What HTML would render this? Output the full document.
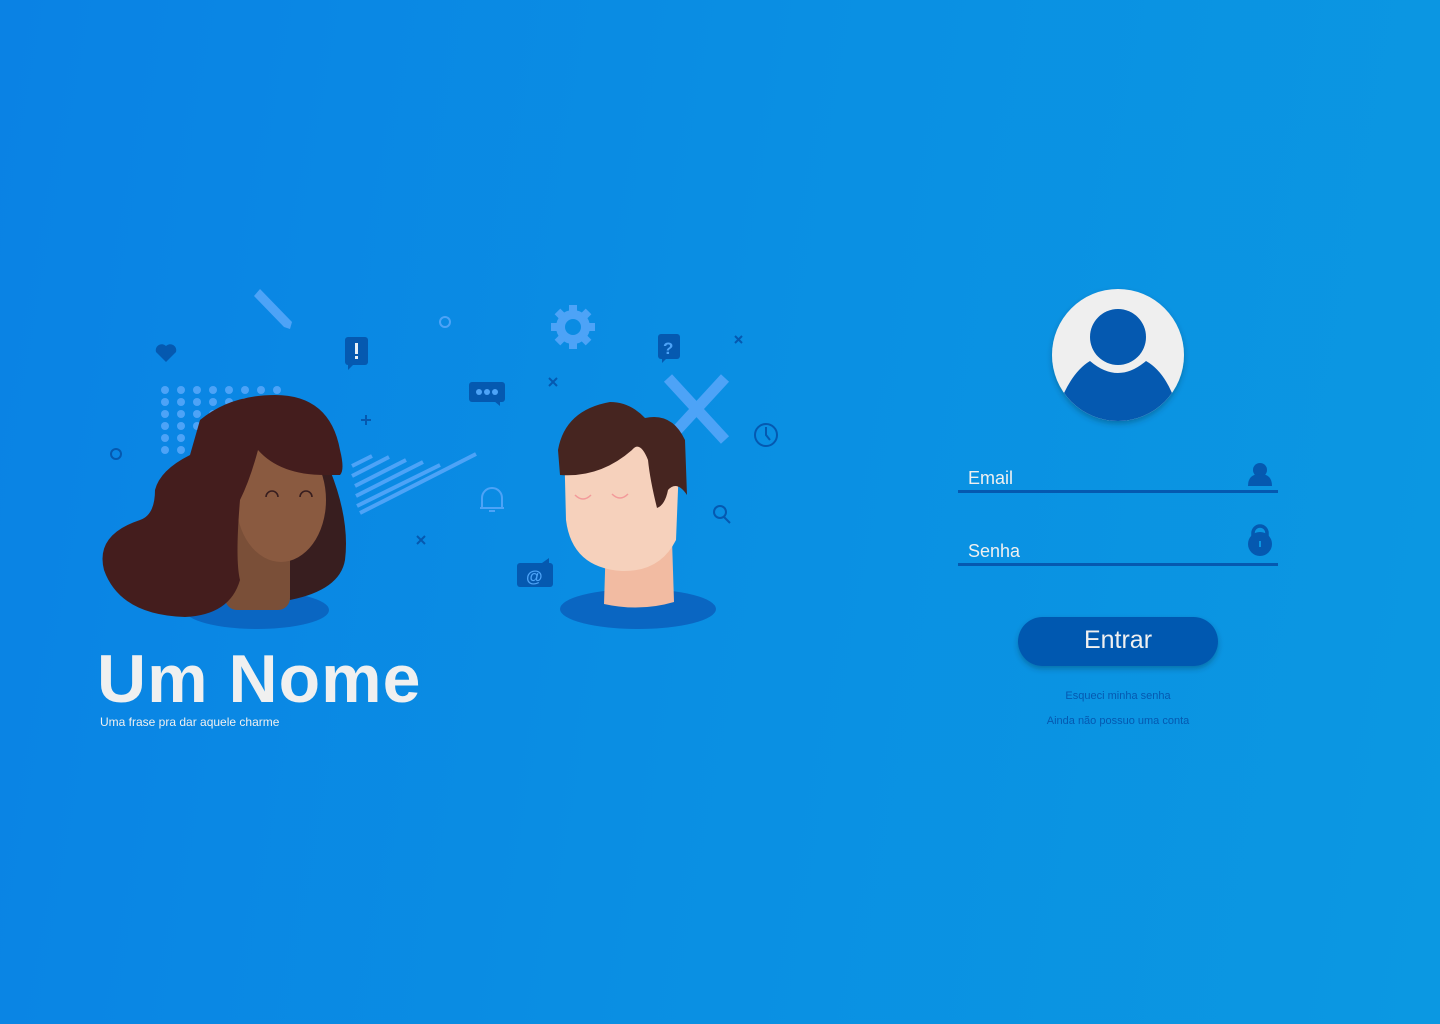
<!DOCTYPE html>
<html><head><meta charset="utf-8"><style>
html,body{margin:0;padding:0}
body{width:1440px;height:1024px;overflow:hidden;background:linear-gradient(100deg,#0a82e4 0%,#0a8fe3 50%,#0b98e2 100%);font-family:"Liberation Sans",sans-serif;position:relative}
.t{position:absolute;color:#f0f0f0}
</style></head><body>
<svg width="1440" height="1024" style="position:absolute;left:0;top:0">
<defs><filter id="sh" x="-20%" y="-20%" width="140%" height="150%"><feDropShadow dx="0" dy="3" stdDeviation="3" flood-color="#034" flood-opacity="0.35"/></filter></defs>
<g fill="#4da3f7">
<circle cx="165" cy="390" r="4"/><circle cx="181" cy="390" r="4"/><circle cx="197" cy="390" r="4"/><circle cx="213" cy="390" r="4"/><circle cx="229" cy="390" r="4"/><circle cx="245" cy="390" r="4"/><circle cx="261" cy="390" r="4"/><circle cx="277" cy="390" r="4"/>
<circle cx="165" cy="402" r="4"/><circle cx="181" cy="402" r="4"/><circle cx="197" cy="402" r="4"/><circle cx="213" cy="402" r="4"/><circle cx="229" cy="402" r="4"/><circle cx="245" cy="402" r="4"/>
<circle cx="165" cy="414" r="4"/><circle cx="181" cy="414" r="4"/><circle cx="197" cy="414" r="4"/><circle cx="213" cy="414" r="4"/>
<circle cx="165" cy="426" r="4"/><circle cx="181" cy="426" r="4"/><circle cx="197" cy="426" r="4"/>
<circle cx="165" cy="438" r="4"/><circle cx="181" cy="438" r="4"/>
<circle cx="165" cy="450" r="4"/><circle cx="181" cy="450" r="4"/>
<path d="M254 296 L260 289 L292 322 L290 329 L284 327 Z"/>
<circle cx="573" cy="327" r="17"/>
<g transform="translate(573 327)">
<rect x="-4" y="-22" width="8" height="8"/><rect x="-4" y="14" width="8" height="8"/><rect x="-22" y="-4" width="8" height="8"/><rect x="14" y="-4" width="8" height="8"/>
<g transform="rotate(45)"><rect x="-4" y="-22" width="8" height="8"/><rect x="-4" y="14" width="8" height="8"/><rect x="-22" y="-4" width="8" height="8"/><rect x="14" y="-4" width="8" height="8"/></g>
</g>
</g>
<circle cx="573" cy="327" r="8" fill="#0a8ce3"/>
<g stroke="#4da3f7" stroke-width="4"><line x1="352" y1="466" x2="372" y2="456"/><line x1="352" y1="476" x2="389" y2="457"/><line x1="355" y1="486" x2="406" y2="460"/><line x1="356" y1="496" x2="423" y2="462"/><line x1="357" y1="506" x2="440" y2="465"/><line x1="360" y1="513" x2="476" y2="454"/></g>
<path d="M668 378 L725 440 M725 378 L668 440" stroke="#4da3f7" stroke-width="11"/>
<g fill="none" stroke="#4da3f7" stroke-width="2"><circle cx="445" cy="322" r="5"/><path d="M482 508 v-10 a10 10 0 0 1 20 0 v10 z M480 508 h24 M489 511 h6"/></g>
<g fill="#0559b0">
<path d="M166 362 l-10-10 a6 6 0 0 1 10-6 a6 6 0 0 1 10 6 z"/>
<rect x="345" y="337" width="23" height="28" rx="3"/><path d="M348 364 v6 l6-6z"/>
<rect x="469" y="382" width="36" height="20" rx="3"/><path d="M494 401 l6 5 v-5z"/>
<rect x="658" y="334" width="22" height="25" rx="3"/><path d="M662 358 v5 l5-5z"/>
<rect x="517" y="563" width="36" height="24" rx="3"/><path d="M542 563 l7-5 v5z"/>
</g>
<rect x="355" y="343" width="3" height="11" fill="#fff" opacity=".9"/><rect x="355" y="356" width="3" height="3" fill="#fff" opacity=".9"/>
<g font-family="Liberation Sans" font-weight="bold"><text x="663" y="354" font-size="17" fill="#4da3f7">?</text><text x="526" y="582" font-size="17" fill="#4da3f7">@</text></g>
<g fill="#4da3f7"><circle cx="479" cy="392" r="3"/><circle cx="487" cy="392" r="3"/><circle cx="495" cy="392" r="3"/></g>
<g fill="none" stroke="#0559b0" stroke-width="2"><circle cx="116" cy="454" r="5"/><path d="M361 420h10M366 415v10M417 536l8 8M425 536l-8 8M549 378l8 8M557 378l-8 8M735 336l7 7M742 336l-7 7"/><circle cx="766" cy="435" r="11"/><path d="M766 427v8l4 5"/><circle cx="720" cy="512" r="6"/><path d="M724 517l6 6"/></g>
<!-- woman -->
<ellipse cx="257" cy="610" rx="72" ry="19" fill="#0a66c2"/>
<path d="M250 460 L330 470 Q350 520 345 560 Q340 590 290 600 L260 470 Z" fill="#381e1f"/>
<rect x="225" y="520" width="65" height="90" rx="12" fill="#7a4f38"/>
<ellipse cx="281" cy="500" rx="45" ry="62" fill="#8a5a40"/>
<path d="M200 420 Q230 395 275 395 Q330 395 340 450 Q345 470 340 475 L325 475 Q280 475 258 450 Q250 480 240 500 Q235 560 240 580 Q230 615 185 617 Q120 615 104 570 Q95 535 140 520 Q155 515 155 490 Q160 470 190 455 Z" fill="#441d1d"/>
<path d="M266 497 a6 6 0 0 1 12 0 M300 497 a6 6 0 0 1 12 0" fill="none" stroke="#381e1f" stroke-width="1.6"/>
<!-- man -->
<ellipse cx="638" cy="609" rx="78" ry="20" fill="#0a66c2"/>
<path d="M606 540 L672 540 L674 602 Q640 612 604 604 Z" fill="#f2bba2"/>
<path d="M564 440 L680 440 L676 540 Q660 572 622 571 Q572 568 566 520 Z" fill="#f6d1bc"/>
<path d="M558 450 Q565 410 610 402 Q630 402 645 418 Q672 412 685 440 L687 495 Q677 480 668 490 Q665 505 657 508 Q650 480 648 460 Q640 440 632 450 Q600 478 560 475 Z" fill="#462520"/>
<path d="M575 495 q8 8 16 0 M612 494 q8 8 16 0" fill="none" stroke="#f39a9a" stroke-width="1.5"/>
<!-- avatar -->
<g filter="url(#sh)"><circle cx="1118" cy="355" r="66" fill="#efefef"/></g>
<clipPath id="c"><circle cx="1118" cy="355" r="66"/></clipPath>
<g clip-path="url(#c)" fill="#0559b0"><circle cx="1118" cy="337" r="28"/><path d="M1050 440 L1064 393 Q1075 370 1090 361 Q1118 385 1146 361 Q1162 370 1172 393 L1186 440 Z"/></g>
<rect x="958" y="490" width="320" height="3" fill="#0559b0"/>
<rect x="958" y="563" width="320" height="3" fill="#0559b0"/>
<g fill="#0559b0"><circle cx="1260" cy="470" r="7"/><path d="M1248 486 q0-12 12-12 q12 0 12 12z"/>
<path d="M1253 539 v-6 a7 7 0 0 1 14 0 v6" fill="none" stroke="#0559b0" stroke-width="3.5"/><circle cx="1260" cy="544" r="12"/></g>
<rect x="1259" y="541" width="2" height="6" fill="#0a96e2"/>
<g filter="url(#sh)"><rect x="1018" y="617" width="200" height="49" rx="24.5" fill="#0559b0"/></g>
</svg>
<div class="t" style="left:968px;top:468px;font-size:18px">Email</div>
<div class="t" style="left:968px;top:541px;font-size:18px">Senha</div>
<div class="t" style="left:1018px;width:200px;top:626px;font-size:25px;text-align:center">Entrar</div>
<div class="t" style="left:958px;width:320px;top:690px;font-size:11px;text-align:center;color:#0559b0">Esqueci minha senha</div>
<div class="t" style="left:958px;width:320px;top:715px;font-size:11px;text-align:center;color:#0559b0">Ainda não possuo uma conta</div>
<div class="t" style="left:97px;top:640px;font-size:68px;font-weight:bold;letter-spacing:1px">Um Nome</div>
<div class="t" style="left:100px;top:715px;font-size:12px">Uma frase pra dar aquele charme</div>
</body></html>
